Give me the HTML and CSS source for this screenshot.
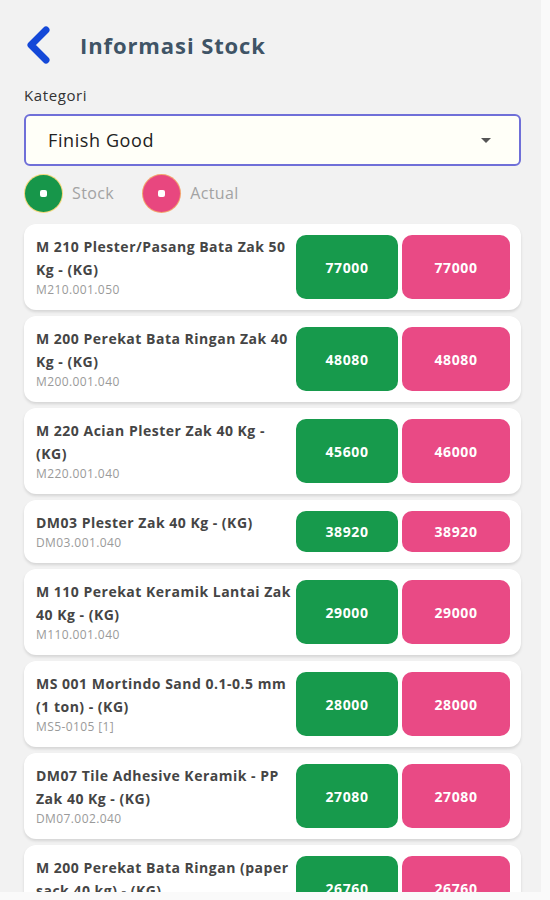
FILE: index.html
```html
<!DOCTYPE html>
<html lang="id">
  <head>
    <meta charset="UTF-8" />
    <meta name="viewport" content="width=device-width, initial-scale=1.0" />
    <title>Informasi Stock</title>
    <link rel="stylesheet" href="styles.css">
  </head>
  <body>
    <div class="app">
      <header class="header">
        <svg class="back" width="28" height="40" viewBox="0 0 28 40">
          <path d="M22 5 L7 20 L22 35" fill="none" stroke="#1448d8" stroke-width="7" stroke-linecap="round" stroke-linejoin="round" />
        </svg>
        <h1>Informasi Stock</h1>
      </header>

      <label class="label" for="kategori">Kategori</label>
      <div class="select" id="kategori">
        <span>Finish Good</span>
        <span class="caret"></span>
      </div>

      <div class="legend">
        <span class="dot green"></span>
        <span class="legend-text">Stock</span>
        <span class="dot pink"></span>
        <span class="legend-text">Actual</span>
      </div>

      <div class="list">
        <div class="card">
          <div class="info">
            <div class="name">M 210 Plester/Pasang Bata Zak 50 Kg - (KG)</div>
            <div class="code">M210.001.050</div>
          </div>
          <div class="qty stock">77000</div>
          <div class="qty actual">77000</div>
        </div>

        <div class="card">
          <div class="info">
            <div class="name">M 200 Perekat Bata Ringan Zak 40 Kg - (KG)</div>
            <div class="code">M200.001.040</div>
          </div>
          <div class="qty stock">48080</div>
          <div class="qty actual">48080</div>
        </div>

        <div class="card">
          <div class="info">
            <div class="name">M 220 Acian Plester Zak 40 Kg - (KG)</div>
            <div class="code">M220.001.040</div>
          </div>
          <div class="qty stock">45600</div>
          <div class="qty actual">46000</div>
        </div>

        <div class="card">
          <div class="info">
            <div class="name">DM03 Plester Zak 40 Kg - (KG)</div>
            <div class="code">DM03.001.040</div>
          </div>
          <div class="qty stock">38920</div>
          <div class="qty actual">38920</div>
        </div>

        <div class="card">
          <div class="info">
            <div class="name">M 110 Perekat Keramik Lantai Zak 40 Kg - (KG)</div>
            <div class="code">M110.001.040</div>
          </div>
          <div class="qty stock">29000</div>
          <div class="qty actual">29000</div>
        </div>

        <div class="card">
          <div class="info">
            <div class="name">MS 001 Mortindo Sand 0.1-0.5 mm (1 ton) - (KG)</div>
            <div class="code">MS5-0105 [1]</div>
          </div>
          <div class="qty stock">28000</div>
          <div class="qty actual">28000</div>
        </div>

        <div class="card">
          <div class="info">
            <div class="name">DM07 Tile Adhesive Keramik - PP Zak 40 Kg - (KG)</div>
            <div class="code">DM07.002.040</div>
          </div>
          <div class="qty stock">27080</div>
          <div class="qty actual">27080</div>
        </div>

        <div class="card">
          <div class="info">
            <div class="name">M 200 Perekat Bata Ringan (paper sack 40 kg) - (KG)</div>
            <div class="code">M200.002.040</div>
          </div>
          <div class="qty stock">26760</div>
          <div class="qty actual">26760</div>
        </div>
      </div>
    </div>
  </body>
</html>
```

FILE: styles.css
```css
body {
  margin: 0;
  background-color: #fafafa;
  font-family: "Open Sans", "Noto Sans", sans-serif;
}

.app {
  width: 541px;
  height: 892px;
  overflow: hidden;
  box-sizing: border-box;
  padding: 24px 20px 0 24px;
  background-color: #f2f2f2;
}

.header {
  display: flex;
  align-items: center;
  height: 42px;
}

.header h1 {
  margin: 0 0 0 28px;
  font-size: 22px;
  font-weight: 700;
  letter-spacing: 0.9px;
  color: #3f5466;
}

.label {
  display: block;
  margin-top: 19px;
  font-size: 15px;
  letter-spacing: 0.6px;
  color: #333;
}

.select {
  display: flex;
  align-items: center;
  justify-content: space-between;
  margin-top: 9px;
  height: 52px;
  box-sizing: border-box;
  padding: 0 28px 0 22px;
  border: 2px solid #6f6fd8;
  border-radius: 6px;
  background-color: #fffff8;
  font-size: 18px;
  letter-spacing: 0.6px;
  color: #222;
}

.caret {
  width: 0;
  height: 0;
  border-left: 5px solid transparent;
  border-right: 5px solid transparent;
  border-top: 5px solid #555;
}

.legend {
  display: flex;
  align-items: center;
  margin-top: 7px;
  height: 40px;
}

.dot {
  position: relative;
  width: 37px;
  height: 37px;
  border-radius: 50%;
  box-shadow: 0 0 0 1px #f2d77a;
}

.dot::after {
  content: "";
  position: absolute;
  left: 15px;
  top: 15px;
  width: 7px;
  height: 7px;
  background: #fff;
  border-radius: 2px;
}

.green {
  margin-left: 1px;
  background-color: #17964a;
}

.pink {
  background-color: #e8477f;
  box-shadow: 0 0 0 1px #f3a36e;
}

.legend-text {
  margin: 0 29px 0 10px;
  font-size: 16px;
  letter-spacing: 0.4px;
  color: #a3a3a3;
}

.list {
  display: flex;
  flex-direction: column;
  gap: 6px;
  margin-top: 11px;
}

.card {
  display: grid;
  grid-template-columns: 1fr 102px 108px;
  column-gap: 4px;
  padding: 11px 11px 11px 12px;
  background-color: #fff;
  border-radius: 12px;
  box-shadow: 0 2px 3px rgba(0, 0, 0, 0.12);
}

.name {
  font-size: 14px;
  font-weight: 700;
  line-height: 23px;
  letter-spacing: 0.5px;
  color: #454545;
}

.code {
  font-size: 12px;
  line-height: 18px;
  letter-spacing: 0.4px;
  color: #9a9a9a;
}

.qty {
  display: flex;
  align-items: center;
  justify-content: center;
  border-radius: 10px;
  font-size: 14px;
  font-weight: 700;
  letter-spacing: 0.6px;
  color: #fff;
}

.stock {
  background-color: #179a4c;
}

.actual {
  background-color: #e94a85;
}
```
